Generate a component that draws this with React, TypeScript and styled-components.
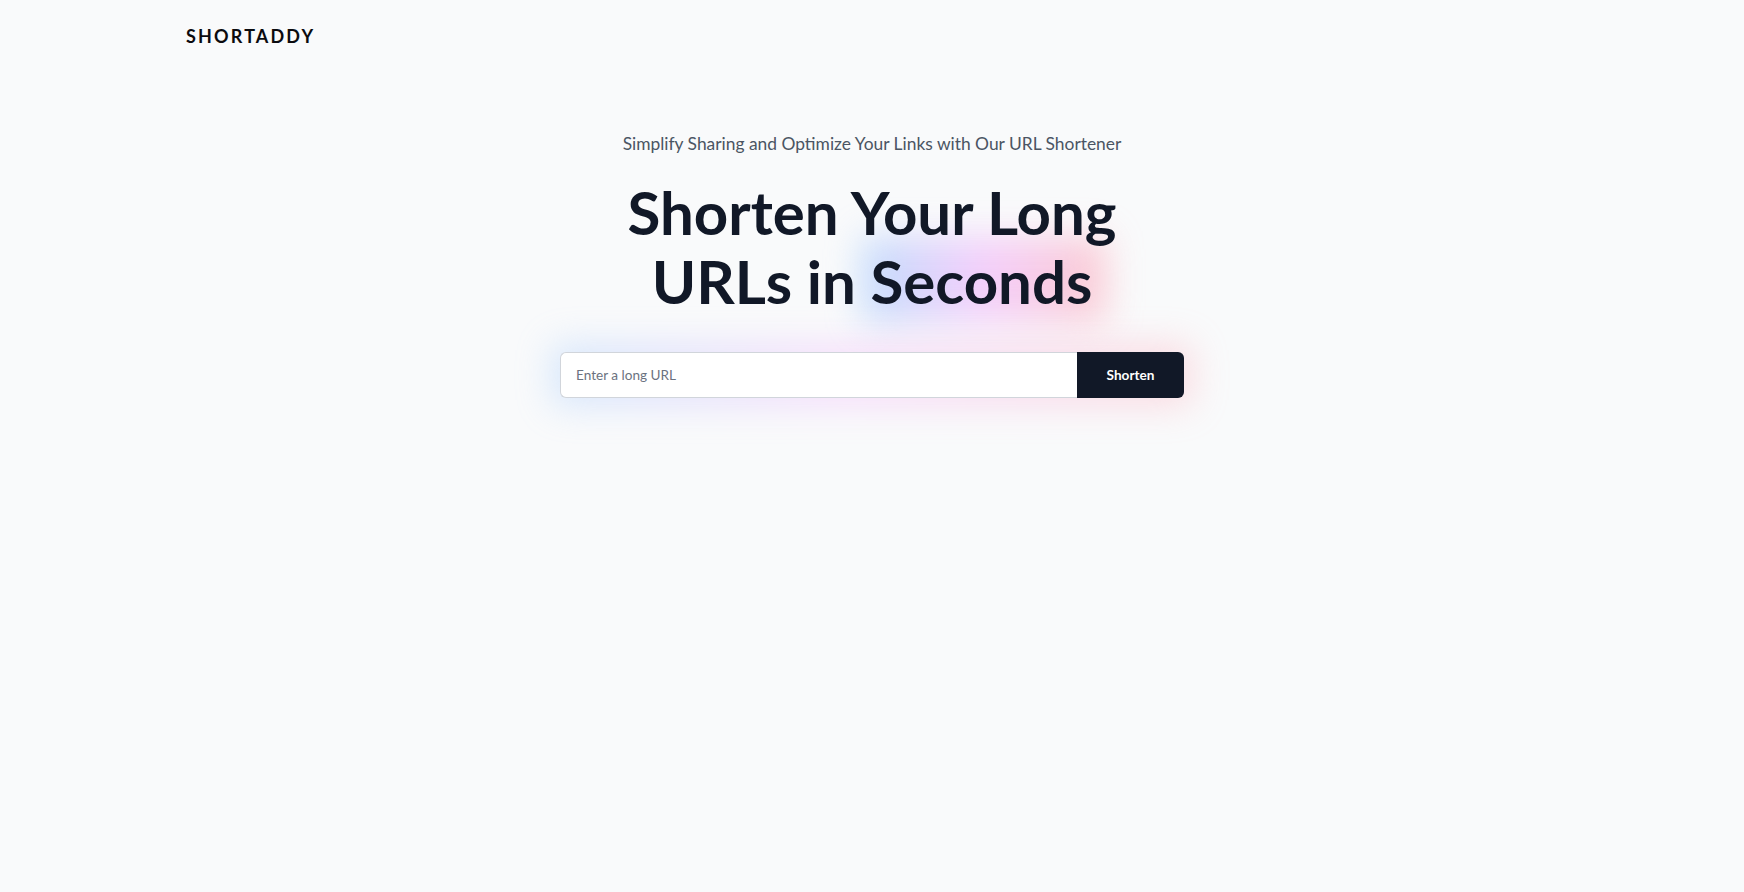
import React from 'react'
import styled, { createGlobalStyle } from 'styled-components'

const GlobalStyle = createGlobalStyle`
    html, body {
        margin: 0;
        padding: 0;
        background: #f9fafb;
    }
    body {
        font-family: 'Lato', 'Noto Sans', sans-serif;
        color: #111827;
    }
    * {
        box-sizing: border-box;
    }
`

export default function App() {
    return (
        <>
            <GlobalStyle />
            <Page>
                <Header>
                    <Logo>SHORTADDY</Logo>
                </Header>
                <Hero>
                    <Tagline>
                        Simplify Sharing and Optimize Your Links with Our URL
                        Shortener
                    </Tagline>
                    <Title>
                        Shorten Your Long
                        <br />
                        URLs in <Highlight>Seconds</Highlight>
                    </Title>
                    <Form onSubmit={(e) => e.preventDefault()}>
                        <UrlInput type="text" placeholder="Enter a long URL" />
                        <SubmitButton type="submit">Shorten</SubmitButton>
                    </Form>
                </Hero>
            </Page>
        </>
    )
}

const Page = styled.div`
    min-height: 100vh;
    background: #f9fafb;
`

const Header = styled.header`
    max-width: 1404px;
    margin: 0 auto;
    padding: 22px 16px;
    display: flex;
    align-items: center;
`

const Logo = styled.div`
    font-size: 18px;
    line-height: 28px;
    font-weight: 700;
    letter-spacing: 0.12em;
    color: #0b0b0f;
`

const Hero = styled.main`
    display: flex;
    flex-direction: column;
    align-items: center;
    text-align: center;
    padding-top: 58px;
`

const Tagline = styled.p`
    margin: 0;
    font-size: 17.4px;
    line-height: 28px;
    color: #4b5563;
`

const Title = styled.h1`
    margin: 20px 0 0;
    font-size: 60px;
    line-height: 69px;
    font-weight: 700;
    color: #111827;
    isolation: isolate;
`

const Highlight = styled.span`
    position: relative;
    display: inline-block;

    &::before {
        content: '';
        position: absolute;
        inset: -10px -14px -6px -8px;
        background: linear-gradient(90deg, #93c5fd, #f0abfc 50%, #fda4af);
        filter: blur(18px);
        opacity: 0.55;
        z-index: -1;
    }
`

const Form = styled.form`
    position: relative;
    isolation: isolate;
    display: flex;
    width: 624px;
    height: 46px;
    margin-top: 36px;

    &::before {
        content: '';
        position: absolute;
        inset: -8px -8px;
        background: linear-gradient(90deg, #93c5fd, #f0abfc 45%, #fda4af);
        filter: blur(18px);
        opacity: 0.35;
        z-index: -1;
    }
`

const UrlInput = styled.input`
    flex: 1;
    min-width: 0;
    height: 100%;
    padding: 0 15px;
    border: 1px solid #d1d5db;
    border-right: none;
    border-radius: 6px 0 0 6px;
    background: #fff;
    font-family: 'Lato', 'Noto Sans', sans-serif;
    font-size: 13.6px;
    color: #111827;
    outline: none;

    &::placeholder {
        color: #6b7280;
    }
`

const SubmitButton = styled.button`
    width: 107px;
    height: 100%;
    border: none;
    border-radius: 0 6px 6px 0;
    background: #111827;
    color: #fff;
    font-family: 'Lato', 'Noto Sans', sans-serif;
    font-size: 13.6px;
    font-weight: 700;
    cursor: pointer;
`
